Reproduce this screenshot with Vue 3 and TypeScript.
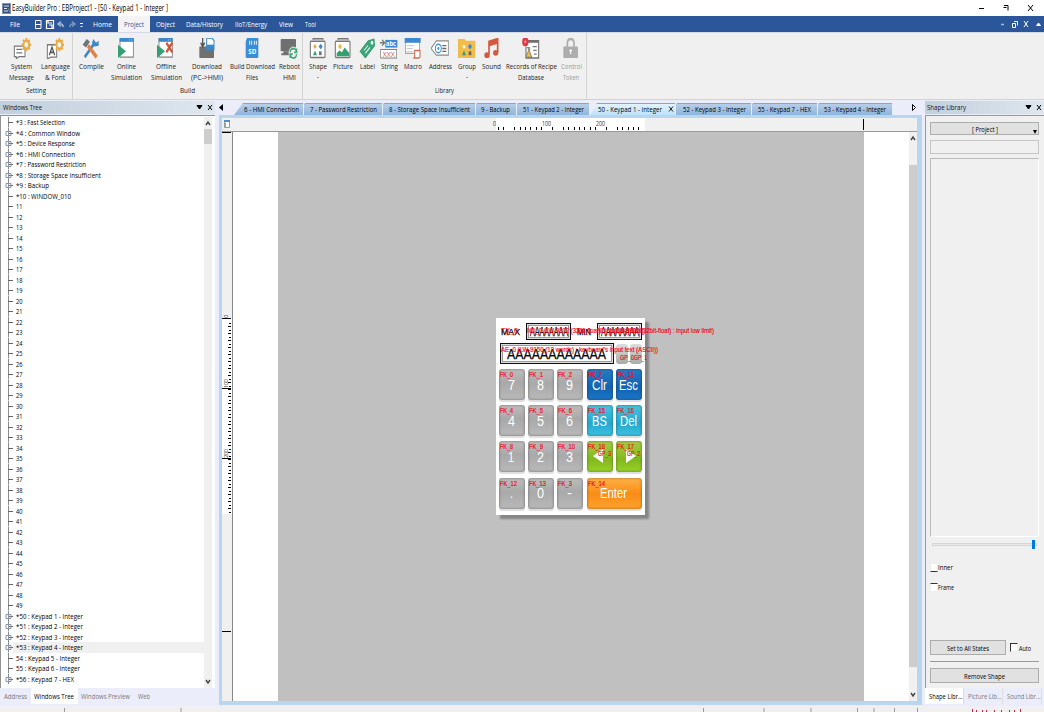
<script setup lang="ts">
import { defineComponent, h } from 'vue'

// Single line of text squeezed or stretched to an exact width.
const Fit = defineComponent({
  props: { t: { type: String, required: true }, w: { type: Number, required: true }, s: { type: Number, default: 8 } },
  setup(p) {
    return () => h('svg', { width: p.w, height: 10, style: { display: 'block', overflow: 'visible', flex: 'none' } }, [
      h('text', { x: 0, y: 5 + p.s * 0.36, 'font-size': p.s, fill: 'currentColor', textLength: p.w, lengthAdjust: 'spacingAndGlyphs' }, p.t),
    ])
  },
})

type Line = [string, number]
interface Tool { icon: string; w: number; lines: Line[]; off?: boolean; drop?: boolean }
interface Group { title: Line; w: number; pad: number; tools: Tool[] }

const gear = '<path d="M20 0v14M13 7h14M15 2l10 10M25 2l-10 10" stroke="#e9ab3f" stroke-width="2.6"/><circle cx="20" cy="7" r="4.2" fill="#f4f1ea" stroke="#e9ab3f" stroke-width="2.6"/>'
const windowShape = '<rect x="3" y="1" width="20" height="19" fill="#fff" stroke="#777" stroke-width="1.2"/><path d="M2.5 0h21v4h-21z" fill="#3b87c8"/><path d="M17 2h1M20 2h1" stroke="#fff"/>'
const card = '<path d="M6 2V.8h15V2" fill="none" stroke="#777" stroke-width="1.4"/><rect x="2" y="3.5" width="22" height="17" rx="1" fill="#fff" stroke="#777" stroke-width="1.6"/>'
const icons: Record<string, string> = {
  message: '<path d="M2 8.5h16v11H9l-4 2v-2H2z" fill="#fff" stroke="#777" stroke-width="1.5"/><path d="M5 12h9M5 15.5h9" stroke="#777" stroke-width="1.4"/>' + gear,
  language: '<path d="M2 7h14v13H7l-5 2z" fill="#fff" stroke="#777" stroke-width="1.5"/><path d="M5 18L9 9.5l4 8.500M6.500 15h5" fill="none" stroke="#555" stroke-width="1.8"/>' + gear,
  compile: '<path d="M4 20L19 5" stroke="#3b87c8" stroke-width="3.4"/><path d="M17 1l-2 4 3 4 7-1V3l-4 2z" fill="#3b87c8"/><path d="M9 8l13 12" stroke="#e08245" stroke-width="4.4"/><path d="M1 7l6-6 5 3-6 6z" fill="#6f7479"/>',
  online: windowShape + '<path d="M0 7v14l12-7z" fill="#32a071"/>',
  offline: windowShape + '<path d="M0 7v14l12-7z" fill="#32a071"/><path d="M14 5l9 10M23 5l-9 10" stroke="#d1563c" stroke-width="3"/>',
  download: '<rect x="2" y="9" width="22" height="12" rx="1" fill="#707070"/><path d="M7 0v9M4 5l3 4 3-4" fill="none" stroke="#585858" stroke-width="2"/><path d="M13 0h8l3 3v9H13z" fill="#fff" stroke="#3b87c8" stroke-width="1.5"/><path d="M13 7h11v5H13z" fill="#3b87c8"/>',
  sd: '<path d="M6 0h17v19q0 2-2 2H6q-2 0-2-2V4z" fill="#3b8dd5"/><path d="M10 3v4M13 3v4M17 3v4M20 3v4" stroke="#fff" stroke-width="1.300"/><text x="8" y="17" font-size="8" font-weight="bold" textLength="12" lengthAdjust="spacingAndGlyphs" fill="#fff">SD</text>',
  reboot: '<rect x="1" y="1" width="23" height="13" rx="1" fill="#707070"/><path d="M2 17h13M5 15h10" stroke="#707070" stroke-width="2"/><circle cx="20" cy="16" r="7" fill="#f0f0f0"/><path d="M15 15q1-4 5-4 3 0 5 3M25 17q-1 4-5 4-3 0-5-3M25 11v4h-4M15 21v-4h4" fill="none" stroke="#44a57a" stroke-width="1.9"/>',
  shape: card + '<circle cx="9" cy="9" r="2.2" fill="#f1a93c"/><path d="M17.500 6l3 3-3 3-3-3z" fill="#3b87c8"/><path d="M9 13l3 5H6z" fill="#32a071"/><rect x="15" y="14" width="4" height="4" fill="#777"/>',
  picture: card + '<circle cx="9" cy="9" r="2.5" fill="#f1b944"/><path d="M4 19v-3l4-3 4 2 4-5 7 6v3z" fill="#32a071"/>',
  label: '<path d="M15 3l9-2 1 7L11 21l-8-7z" fill="#3ba779" stroke="#2c9568"/><circle cx="21" cy="5" r="2" fill="#fff"/><path d="M9 13l6-5M11 16l7-6" stroke="#fff" stroke-width="1.2"/>',
  string: '<path d="M0 5h6M3 2l4 3-4 3" fill="none" stroke="#777" stroke-width="1.500"/><rect x="8" y="2" width="18" height="8" fill="#3b87d0"/><text x="9" y="8.500" font-size="8" font-weight="bold" textLength="15" lengthAdjust="spacingAndGlyphs" fill="#fff">abc</text><rect x="1" y="12" width="24" height="9" fill="#fff" stroke="#777"/><text x="4" y="19.500" font-size="8" textLength="18" lengthAdjust="spacingAndGlyphs" fill="#cf573f">XXX</text>',
  macro: '<rect x="2" y="1" width="21" height="15" fill="#fff" stroke="#888"/><path d="M1 0h24v5H1z" fill="#3b87d0"/><path d="M4 8h11M4 11h9M4 14h9" stroke="#bbb"/><path d="M16 13h8v6q0 2-2 2h-8q2 0 2-2z" fill="#fff" stroke="#d16b50" stroke-width="1.6"/>',
  address: '<path d="M8 3h18v15H8l-8-7z" fill="#fff" stroke="#888" stroke-width="1.3"/><circle cx="11" cy="11" r="4.5" fill="#fff" stroke="#4091d4" stroke-width="1.5"/><circle cx="11" cy="11" r="1.5" fill="#4091d4"/><path d="M17 8h6M17 11h6M17 14h6" stroke="#666" stroke-width="1.4"/>',
  group: '<path d="M0 1h10l2 2h14v18H0z" fill="#f0bd4b"/><circle cx="9" cy="9" r="2" fill="#fff"/><path d="M18 6l3 3-3 3-3-3z" fill="#3b87c8"/><path d="M9 13l3 5H6z" fill="#32a071"/><rect x="16" y="14" width="4" height="4" fill="#666"/>',
  sound: '<path d="M9 17V4l13-3v14" fill="none" stroke="#d4593e" stroke-width="2.5"/><path d="M9 4l13-3v5L9 9z" fill="#d4593e"/><ellipse cx="6" cy="18" rx="4" ry="3" fill="#d4593e"/><ellipse cx="19" cy="15.500" rx="4" ry="3" fill="#d4593e"/>',
  recipe: '<path d="M8 3h17v18H6V9" fill="#fff" stroke="#707070" stroke-width="1.600"/><path d="M9 3h16v2H9z" fill="#707070"/><circle cx="5" cy="4" r="4.800" fill="#dc3d43"/><circle cx="5" cy="4" r="1.500" fill="#f4a4a4"/><path d="M7 10h5M9.500 10v4l-4 6h9l-3-6v-4" fill="#f1b944" stroke="#777"/><path d="M16 9h6M17 13h5M18 17h4" stroke="#777" stroke-width="1.300"/>',
  lock: '<path d="M8 10V6q0-5 5-5t5 5v4" fill="none" stroke="#adadad" stroke-width="2.6"/><rect x="2" y="9" width="22" height="12" rx="1" fill="#adadad"/><path d="M13 12v5M11 13h4" stroke="#fff" stroke-width="1.6"/>',
}

const groups: Group[] = [
  { title: ['Setting', 20], w: 73, pad: 5, tools: [
    { icon: 'message', w: 33, lines: [['System', 21], ['Message', 25]] },
    { icon: 'language', w: 34, lines: [['Language', 29], ['& Font', 20]] },
  ] },
  { title: ['Build', 15], w: 230, pad: 0, tools: [
    { icon: 'compile', w: 36, lines: [['Compile', 25]] },
    { icon: 'online', w: 35, lines: [['Online', 19], ['Simulation', 31]] },
    { icon: 'offline', w: 44, lines: [['Offline', 20], ['Simulation', 31]] },
    { icon: 'download', w: 38, lines: [['Download', 30], ['(PC->HMI)', 32]] },
    { icon: 'sd', w: 52, lines: [['Build Download', 45], ['Files', 12]] },
    { icon: 'reboot', w: 22, lines: [['Reboot', 21], ['HMI', 13]] },
  ] },
  { title: ['Library', 19], w: 284, pad: 2, tools: [
    { icon: 'shape', w: 26, lines: [['Shape', 18]], drop: true },
    { icon: 'picture', w: 24, lines: [['Picture', 20]] },
    { icon: 'label', w: 24, lines: [['Label', 15]] },
    { icon: 'string', w: 20, lines: [['String', 17]] },
    { icon: 'macro', w: 28, lines: [['Macro', 18]] },
    { icon: 'address', w: 26, lines: [['Address', 23]] },
    { icon: 'group', w: 28, lines: [['Group', 18]], drop: true },
    { icon: 'sound', w: 21, lines: [['Sound', 19]] },
    { icon: 'recipe', w: 58, lines: [['Records of Recipe', 51], ['Database', 26]] },
    { icon: 'lock', w: 22, lines: [['Control', 21], ['Token', 16]], off: true },
  ] },
]

const menus: { t: string; w: number; cell: number; on?: boolean }[] = [
  { t: 'Home', w: 19, cell: 31 }, { t: 'Project', w: 20, cell: 32, on: true }, { t: 'Object', w: 19, cell: 31 },
  { t: 'Data/History', w: 37, cell: 48 }, { t: 'IIoT/Energy', w: 32, cell: 45 }, { t: 'View', w: 14, cell: 24 }, { t: 'Tool', w: 11, cell: 26 },
]

interface Row { t: string; w: number; plus: boolean; sel?: boolean }
const rows: Row[] = [
  { t: '*3 : Fast Selection', w: 49, plus: false }, { t: '*4 : Common Window', w: 64, plus: true },
  { t: '*5 : Device Response', w: 59, plus: true }, { t: '*6 : HMI Connection', w: 59, plus: true },
  { t: '*7 : Password Restriction', w: 70, plus: true }, { t: '*8 : Storage Space Insufficient', w: 85, plus: true },
  { t: '*9 : Backup', w: 33, plus: true }, { t: '*10 : WINDOW_010', w: 55, plus: false },
  ...Array.from({ length: 39 }, (_, i) => ({ t: String(i + 11), w: 6.5, plus: false })),
  { t: '*50 : Keypad 1 - Integer', w: 67, plus: true }, { t: '*51 : Keypad 2 - Integer', w: 67, plus: true },
  { t: '*52 : Keypad 3 - Integer', w: 67, plus: true }, { t: '*53 : Keypad 4 - Integer', w: 67, plus: true, sel: true },
  { t: '54 : Keypad 5 - Integer', w: 64, plus: false }, { t: '55 : Keypad 6 - Integer', w: 64, plus: false },
  { t: '*56 : Keypad 7 - HEX', w: 58, plus: true },
]

const tabs: { t: string; w: number; cell: number; pad: number; kind?: string }[] = [
  { t: '6 - HMI Connection', w: 55, cell: 70, pad: 10, kind: 'first' },
  { t: '7 - Password Restriction', w: 67, cell: 79, pad: 6 },
  { t: '8 - Storage Space Insufficient', w: 81, cell: 93, pad: 6 },
  { t: '9 - Backup', w: 29, cell: 41, pad: 5 },
  { t: '51 - Keypad 2 - Integer', w: 61, cell: 73, pad: 6 },
  { t: '50 - Keypad 1 - Integer', w: 64, cell: 86, pad: 8, kind: 'active' },
  { t: '52 - Keypad 3 - Integer', w: 63, cell: 76, pad: 7 },
  { t: '55 - Keypad 7 - HEX', w: 53, cell: 66, pad: 6 },
  { t: '53 - Keypad 4 - Integer', w: 62, cell: 75, pad: 6 },
]

const hTicks = Array.from({ length: 27 }, (_, i) => i).filter(i => ![2, 9, 11, 19, 21].includes(i)).map(i => 498 + i * 5.4 - 222)
const vTicks = Array.from({ length: 55 }, (_, i) => 322.5 + i * 3.5 - 132)

interface Key { t: string; w: number; c: string; id: string; idw: number; arrow?: string; sub?: string }
const keys: Key[] = [
  { t: '7', w: 7, c: 'g', id: 'FK_0', idw: 13 }, { t: '8', w: 7, c: 'g', id: 'FK_1', idw: 14 }, { t: '9', w: 7, c: 'g', id: 'FK_2', idw: 14 },
  { t: 'Clr', w: 15, c: 'b', id: 'FK_7', idw: 14 }, { t: 'Esc', w: 19, c: 'b', id: 'FK_11', idw: 17 },
  { t: '4', w: 7, c: 'g', id: 'FK_4', idw: 13 }, { t: '5', w: 7, c: 'g', id: 'FK_5', idw: 14 }, { t: '6', w: 7, c: 'g', id: 'FK_6', idw: 14 },
  { t: 'BS', w: 15, c: 'c', id: 'FK_15', idw: 17 }, { t: 'Del', w: 17, c: 'c', id: 'FK_16', idw: 17 },
  { t: '1', w: 6, c: 'g', id: 'FK_8', idw: 13 }, { t: '2', w: 7, c: 'g', id: 'FK_9', idw: 14 }, { t: '3', w: 7, c: 'g', id: 'FK_10', idw: 17 },
  { t: '', w: 0, c: 'l', id: 'FK_18', idw: 17, arrow: 'M6 15l10-7v14z', sub: 'GP_3' }, { t: '', w: 0, c: 'l', id: 'FK_17', idw: 17, arrow: 'M20 15l-10-7v14z', sub: 'GP_2' },
  { t: '.', w: 3, c: 'g', id: 'FK_12', idw: 17 }, { t: '0', w: 7, c: 'g', id: 'FK_13', idw: 17 }, { t: '-', w: 5, c: 'g', id: 'FK_3', idw: 14 },
  { t: 'Enter', w: 27, c: 'o wide', id: 'FK_14', idw: 17 },
]
</script>

<template>
  <div class="app">
    <header class="title">
      <svg class="logo" width="9" height="11"><rect x=".5" y=".5" width="8" height="10" fill="#35507c" stroke="#8393ad" /><path d="M2 3h5M2 5.500h3M2 8h4" stroke="#dbe4f1" /><path d="M6 5l2 4" stroke="#88a" /></svg>
      <Fit t="EasyBuilder Pro : EBProject1 - [50 - Keypad 1 - Integer ]" :w="156" :s="8.5" />
      <svg class="caption" width="64" height="12" fill="none" stroke="#000"><path d="M2 6.500h5M27 3.500h4v5M26.500 5.500h3M51 3l5 6M56 3l-5 6" /></svg>
    </header>

    <nav class="menu">
      <div class="file"><Fit t="File" :w="10" /></div>
      <svg class="quick" width="52" height="16" fill="none" stroke="#fff">
        <path d="M.5 4.500h5.500v8H.5zM1 8.500h5" />
        <path d="M11.500 4.500h7v8h-7zM13 4v3h4M14 9h3v3" stroke-width="1.200" />
        <path d="M28.500 11q-1-4-5-3M26 5.500l-3 2.500 3 2.500" stroke="#a7b8d4" stroke-width="1.400" />
        <path d="M34.500 11q1-4 5-3M37 5.500l3 2.500-3 2.500" stroke="#7f99c2" stroke-width="1.400" />
        <path d="M45 7.500h3M45.500 10.500h2" />
      </svg>
      <div v-for="m in menus" :key="m.t" class="menu-item" :class="{ on: m.on }" :style="{ width: m.cell + 'px' }"><Fit :t="m.t" :w="m.w" /></div>
      <svg class="caption" width="46" height="16" fill="none" stroke="#fff"><path d="M3 8.500h3" stroke="#a9bbd8" stroke-width="1.500" /><path d="M14.500 7.500h3v4h-3zM16 5.500h3.500v4M26 5l4 6M30 5l-4 6" /><path d="M38.500 9.500L40.500 7l2 2.500z" fill="#fff" /></svg>
    </nav>

    <section class="ribbon">
      <div v-for="g in groups" :key="g.title[0]" class="group" :style="{ width: g.w + 'px' }">
        <div class="tools" :style="{ paddingLeft: g.pad + 'px' }">
          <div v-for="t in g.tools" :key="t.icon" class="tool" :class="{ off: t.off }" :style="{ width: t.w + 'px' }">
            <svg width="18" height="21" viewBox="0 0 27 22" preserveAspectRatio="none" fill="none" v-html="icons[t.icon]"></svg>
            <Fit v-for="l in t.lines" :key="l[0]" :t="l[0]" :w="l[1]" class="tool-label" />
            <i v-if="t.drop" class="drop"></i>
          </div>
        </div>
        <Fit :t="g.title[0]" :w="g.title[1]" class="group-title" />
      </div>
    </section>

    <main class="body">
      <aside class="left">
        <div class="panel-head"><Fit t="Windows Tree" :w="39" /><svg class="caption" width="20" height="12" fill="none" stroke="#000"><path d="M2 4.500h5L4.500 8z" fill="#000" /><path d="M13 4l4 5M17 4l-4 5" /></svg></div>
        <div class="tree">
          <div class="list">
            <div v-for="r in rows" :key="r.t" class="row" :class="{ sel: r.sel }">
              <svg width="10.500" height="10.500" fill="none"><path d="M3.500 0v10.500" stroke="#8b8b8b" /><path d="M3 5.500h5" stroke="#666" /><path v-if="r.plus" d="M1 3.500h5v4H1zM3.500 3v5" stroke="#8a95a8" /></svg>
              <Fit :t="r.t" :w="r.w" />
            </div>
          </div>
          <div class="scroll">
            <svg width="8" height="12" fill="none" stroke="#444"><path d="M2 8l2-3 2 3" stroke-width="1.400" /></svg>
            <i class="thumb"></i>
            <svg class="end" width="8" height="12" fill="none" stroke="#444"><path d="M2 4l2 3 2-3" stroke-width="1.400" /></svg>
          </div>
        </div>
        <div class="bottom-tabs">
          <span class="bt"><Fit t="Address" :w="23" /></span>
          <span class="bt on"><Fit t="Windows Tree" :w="40" /></span>
          <span class="bt"><Fit t="Windows Preview" :w="49" /></span>
          <span class="bt"><Fit t="Web" :w="12" /></span>
        </div>
      </aside>

      <section class="center">
        <div class="tabs">
          <svg class="prev" width="18" height="13"><path d="M7 3v7L3 6.500z" /></svg>
          <div v-for="t in tabs" :key="t.t" class="tab" :class="t.kind" :style="{ width: t.cell + 'px', paddingLeft: t.pad + 'px' }">
            <Fit :t="t.t" :w="t.w" :s="7.5" />
            <svg v-if="t.kind === 'active'" class="close" width="6" height="8"><path d="M1 1.500l4 5M5 1.500l-4 5" stroke="#222" /></svg>
          </div>
          <svg class="next" width="8" height="13"><path d="M2.500 3.500v6l3-3z" fill="none" stroke="#000" /></svg>
        </div>
        <div class="frame">
          <svg class="hruler" width="695" height="14">
            <rect width="695" height="14" fill="#f0f0f0" /><rect x="274" width="149" height="13" fill="#fff" />
            <path v-for="x in hTicks" :key="x" :d="`M${Math.round(x) + .5} 9v3`" stroke="#000" />
            <g font-size="7" fill="#333"><text x="271" y="8" textLength="3" lengthAdjust="spacingAndGlyphs">0</text><text x="320" y="8" textLength="9" lengthAdjust="spacingAndGlyphs">100</text><text x="374" y="8" textLength="9" lengthAdjust="spacingAndGlyphs">200</text></g>
            <path d="M641.500 1v11" stroke="#000" /><path d="M0 13.500h695" stroke="#999" />
            <path d="M2.500 2.500h5v7h-5z" fill="#fff" stroke="#999" /><path d="M2 3h6" stroke="#4c8fd0" stroke-width="2" /><path d="M3.500 5v4" stroke="#db9656" />
          </svg>
          <div class="work">
            <svg class="vruler" width="11" height="569">
              <rect width="11" height="569" fill="#f0f0f0" /><rect y="186" width="10" height="196" fill="#fff" />
              <path v-for="(y, i) in vTicks" :key="y" :d="`M${i % 2 ? 6 : 7} ${Math.round(y)}.5h${i % 2 ? 3 : 2}`" stroke="#000" />
              <path d="M0 .5h9M0 186.500h9M0 256.500h9M0 326.500h9M0 499.500h9" stroke="#000" />
              <g font-size="6" fill="#333"><text transform="translate(6 186) rotate(-90)">0</text><text transform="translate(6 256) rotate(-90)" textLength="9">100</text><text transform="translate(6 326) rotate(-90)" textLength="9">200</text></g>
              <path d="M10.500 0v569" stroke="#888" />
            </svg>
            <div class="canvas">
              <div class="keypad">
                <div class="limits">
                  <Fit t="MAX" :w="19" :s="9" /><div class="field small"><Fit t="AAAAAAAA" :w="38" :s="12" /></div>
                  <Fit t="MIN" :w="14" :s="9" /><div class="field small"><Fit t="AAAAAAAA" :w="38" :s="12" /></div>
                </div>
                <div class="entry">
                  <div class="field"><Fit t="AAAAAAAAAAAA" :w="99" :s="15" /></div>
                  <i class="mini"></i><i class="mini"></i>
                </div>
                <div class="keys">
                  <div v-for="k in keys" :key="k.id" class="key" :class="k.c">
                    <Fit v-if="k.t" :t="k.t" :w="k.w" :s="15" class="face" />
                    <svg v-else class="arrow" width="26" height="31"><path :d="k.arrow" fill="#fff" /></svg>
                    <Fit :t="k.id" :w="k.idw" :s="8" class="tag" />
                    <Fit v-if="k.sub" :t="k.sub" :w="13" :s="8" class="subtag" />
                  </div>
                </div>
                <Fit t="TX_0" :w="17" class="note n1" />
                <Fit t="ND_0 (LW-9302 (32bit-float) : input high limit)" :w="118" class="note n2" />
                <Fit t="TX_1" :w="14" class="note n3" />
                <Fit t="ND_1 (LW-9300 (32bit-float) : input low limit)" :w="117" class="note n4" />
                <Fit t="AE_0 (LW-9150 (12 words) : keyboard's input text (ASCII))" :w="157" class="note n5" />
                <Fit t="GP_0" :w="14" class="note n6" />
                <Fit t="GP_1" :w="13" class="note n7" />
              </div>
            </div>
            <div class="scroll">
              <svg width="8" height="33" fill="none" stroke="#444"><path d="M2 8l2-3 2 3" stroke-width="1.400" /></svg>
              <i class="thumb tall"></i>
              <svg class="end" width="8" height="12" fill="none" stroke="#444"><path d="M2 4l2 3 2-3" stroke-width="1.400" /></svg>
            </div>
          </div>
        </div>
      </section>

      <aside class="right">
        <div class="panel-head"><Fit t="Shape Library" :w="39" /><svg class="caption" width="20" height="12" fill="none" stroke="#000"><path d="M2 4.500h5L4.500 8z" fill="#000" /><path d="M13 4l4 5M17 4l-4 5" /></svg></div>
        <div class="shape-panel">
          <div class="btn project"><Fit t="[ Project ]" :w="26" /><svg width="4" height="4"><path d="M0 0h4L2 4z" /></svg></div>
          <div class="input"></div>
          <div class="shapes"></div>
          <div class="slider"><i></i></div>
          <div class="check inner"><i></i><Fit t="Inner" :w="15" /></div>
          <div class="check outline"><i></i><Fit t="Frame" :w="16" /></div>
          <div class="apply"><div class="btn"><Fit t="Set to All States" :w="42" /></div><div class="check auto"><i></i><Fit t="Auto" :w="12" /></div></div>
          <hr>
          <div class="btn"><Fit t="Remove Shape" :w="41" /></div>
        </div>
        <div class="bottom-tabs">
          <span class="bt on"><Fit t="Shape Libr..." :w="33.5" /></span>
          <span class="bt"><Fit t="Picture Lib..." :w="33.5" /></span>
          <span class="bt"><Fit t="Sound Libr..." :w="33.5" /></span>
        </div>
      </aside>
    </main>

    <footer class="status">
      <svg width="1044" height="6"><path d="M64.500 2v4M181 2v4M703.500 2v4M764 2v4M811 2v4M857.500 2v4M874 2v4M894.500 2v4M917.500 2v4" stroke="#999" /><path d="M972.500 3v3M976.500 4v2M982.500 4v2M986.500 4v2M994.500 4v2M1001.500 4v2M1009.500 4v2M1014.500 4v2M1020.500 3v3" stroke="#b5285a" /></svg>
    </footer>
  </div>
</template>

<style>
html, body { margin: 0; background: #f0f0f0; overflow: hidden; }
</style>

<style scoped>
.app { width: 1044px; height: 712px; display: flex; flex-direction: column; background: #f0f0f0; font-family: "Open Sans", "Noto Sans", sans-serif; color: #000; overflow: hidden; }
.app * { box-sizing: border-box; }
.caption { margin-left: auto; flex: none; }
.title { height: 16px; display: flex; align-items: center; background: #fff; padding-left: 2px; }
.title .logo { margin-right: 1px; }
.title .caption { margin-right: 3px; }
.menu { height: 16px; display: flex; align-items: center; background: #2b579a; color: #fff; flex: none; }
.file { width: 35px; padding-left: 10px; }
.menu-item { height: 16px; display: flex; align-items: center; justify-content: center; padding-right: 1px; }
.menu-item.on { background: #f3f3f3; color: #2b579a; }
.quick { flex: none; }
.ribbon { height: 68px; flex: none; display: flex; border-bottom: 1px solid #d2d2d2; border-top: 1px solid #d4dbe6; }
.group { border-right: 1px solid #d2d2d2; display: flex; flex-direction: column; align-items: center; padding-top: 5px; color: #222; }
.tools { width: 100%; height: 48px; display: flex; flex: none; }
.tool { flex: none; display: flex; flex-direction: column; align-items: center; }
.tool > svg:first-child { flex: none; margin-bottom: 2px; }
.tool-label { margin-bottom: .5px; }
.tool.off { color: #999; }
.drop { margin-top: 5px; border: 1.5px solid transparent; border-top-color: #444; }
.group-title { margin-top: -1px; }
.body { height: 606px; flex: none; display: flex; padding-top: 1px; background: #ecedfb; }
.panel-head { height: 13px; display: flex; align-items: center; padding-left: 3px; padding-bottom: 1px; background: linear-gradient(90deg, #c2cfdd, #dfe6ee); color: #111; }
.left { width: 215px; display: flex; flex-direction: column; }
.tree { height: 573px; margin-top: 1px; border: 1px solid #929292; border-right: 0; border-bottom: 0; background: #fff; display: flex; padding-right: 3px; padding-top: 1px; }
.list { flex: 1; overflow: hidden; padding-left: 4px; }
.row { height: 10.5px; display: flex; align-items: center; }
.row.sel { background: linear-gradient(90deg, transparent 8px, #f0f0f0 8px); }
.scroll { width: 8px; flex: none; display: flex; flex-direction: column; background: #f0f0f0; }
.thumb { height: 15px; background: #cdcdcd; }
.thumb.tall { height: 502px; width: 8px; }
.end { margin-top: auto; }
.bottom-tabs { height: 17px; display: flex; align-items: flex-start; color: #777; }
.bt { height: 16px; display: flex; align-items: center; flex: none; padding: 0 4px; }
.bt.on { background: #fff; color: #000; }
.left .bottom-tabs { padding-left: 0; }
.left .bt:first-child { width: 31px; }
.left .bt.on { padding: 0 4px 0 3px; }
.left .bt:nth-child(2) { width: 47px; }
.left .bt:nth-child(3) { padding-left: 3px; width: 58px; }
.left .bt:nth-child(4) { padding-left: 2px; }
.center { width: 703px; margin-left: 4px; height: 605px; }
.tabs { height: 14px; display: flex; align-items: flex-end; margin-left: -4px; }
.tabs .prev { margin-left: 1px; margin-bottom: 1px; }
.tab { height: 12px; flex: none; display: flex; align-items: center; padding-bottom: 1px; background: linear-gradient(#b7cee8, #8fb5dc); border-top: 1px solid #8aa4c4; border-right: 1.5px solid #e6effa; border-radius: 2px 2px 0 0; color: #000; }
.tab.first { clip-path: polygon(9px 0, 100% 0, 100% 100%, 0 100%); }
.tab.active { background: linear-gradient(#e2f4fd, #bfe1f6); clip-path: polygon(7px 0, 100% 0, 100% 100%, 0 100%); }
.close { margin-left: 6px; }
.next { margin: 0 4px 1px auto; }
.frame { height: 590px; border: 3px solid #b9d6ee; border-width: 3px 5px 4px 3px; background: #fff; }
.hruler { display: block; }
.work { height: 569px; display: flex; }
.vruler { flex: none; }
.canvas { width: 676px; flex: none; background: linear-gradient(90deg, #fff 45px, #c0c0c0 45px 631px, #fff 631px); padding: 186px 0 0 263px; }
.keypad { width: 149px; height: 197px; background: #fff; box-shadow: 4px 4px 2px #858585; position: relative; padding: 5px 3px 0 2.5px; font-family: "Liberation Sans", Arial, sans-serif; }
.limits { display: flex; align-items: center; height: 17px; padding-left: 2.5px; gap: 6px; }
.field { border: 1px solid #111; box-shadow: inset 0 0 0 1px #ddd, inset 0 0 0 2px #999; height: 21px; width: 115px; display: flex; align-items: center; justify-content: center; background: #fff; }
.field svg, .limits > svg { stroke: #000; stroke-width: .25; }
.field.small { width: 45px; height: 17px; flex: none; }
.entry { display: flex; align-items: center; gap: 2px; margin: 3px 0 5px 1px; }
.mini { width: 12px; height: 20px; border-radius: 3px; background: linear-gradient(#ddd, #aaa); }
.keys { display: grid; grid-template-columns: repeat(5, 26px); column-gap: 3.4px; row-gap: 5.2px; }
.key { height: 31px; border-radius: 3px; display: flex; align-items: center; justify-content: center; color: #fff; position: relative; box-shadow: inset 0 0 2px 1px rgba(0, 0, 0, .2), 0 2px 1px #ddd; }
.face { margin-right: 1px; }
.key.g { background: linear-gradient(#bdbdbd, #a9a9a9 45%, #b9b9b9); }
.key.b { background: linear-gradient(#237cc9, #1463b2 60%, #1a76c7); }
.key.c { background: linear-gradient(#44c5e0, #26a9cf 60%, #3bc2df); }
.key.l { background: linear-gradient(#a3cc43, #83b91d 60%, #97d02b); }
.key.o { background: linear-gradient(#ffb248, #f98d16 50%, #ffa22c); }
.key.wide { grid-column: span 2; width: 55px; }
.arrow { position: absolute; left: 0; top: 0; }
.tag, .subtag, .note { position: absolute; color: #f00818; stroke: #f00818; stroke-width: .2; }
.tag { left: 1px; top: 0; }
.subtag { left: 11px; top: 7px; }
.n1 { left: 5px; top: 7px; }
.n2 { left: 31px; top: 7px; }
.n3 { left: 81px; top: 7px; }
.n4 { left: 101px; top: 7px; }
.n5 { left: 5px; top: 26px; }
.n6 { left: 124px; top: 34px; }
.n7 { left: 138px; top: 34px; }
.right { width: 119px; margin-left: 3px; display: flex; flex-direction: column; }
.right .panel-head { padding-left: 2px; }
.shape-panel { height: 573px; margin-top: 1px; border-left: 1px solid #999; border-top: 1px solid #999; background: #f0f0f0; padding: 6px 5px 0 4px; }
.btn { height: 15px; border: 1px solid #acacac; background: #e1e1e1; display: flex; align-items: center; justify-content: center; }
.project { height: 13px; position: relative; }
.project svg:last-child { position: absolute; right: 1px; bottom: 0; }
.input { height: 14px; margin-top: 5px; border: 1px solid #c6c6c6; }
.shapes { height: 379px; margin-top: 4px; border: 1px solid #bbb; border-right-color: #fff; border-bottom-color: #fff; }
.slider { height: 3px; margin: 6px 2px 0; border: 1px solid #d5d5d5; background: #e8e8e8; position: relative; }
.slider i { position: absolute; width: 3px; height: 9px; right: 1px; top: -4px; background: #0078d7; }
.check { display: flex; align-items: center; height: 10px; }
.check i { width: 8px; height: 9px; background: #fff; border: 1px solid #eee; border-bottom-color: #333; }
.inner { margin-top: 16px; }
.outline { margin-top: 10px; }
.outline i { border-color: #333 #eee #eee #eee; }
.apply { display: flex; align-items: center; gap: 4px; margin-top: 48px; height: 15px; }
.apply .btn { width: 76px; }
.auto { gap: 1px; }
.auto i { border-color: #333 #eee #eee #333; }
hr { border: 0; border-top: 1px solid #999; margin: 6px 0; height: 0; }
.right .bt { width: 39px; padding: 0 0 0 4px; border-right: 1px solid #ddd; }
.status { height: 6px; background: #f0f0f0; }
.status svg { display: block; }
</style>
